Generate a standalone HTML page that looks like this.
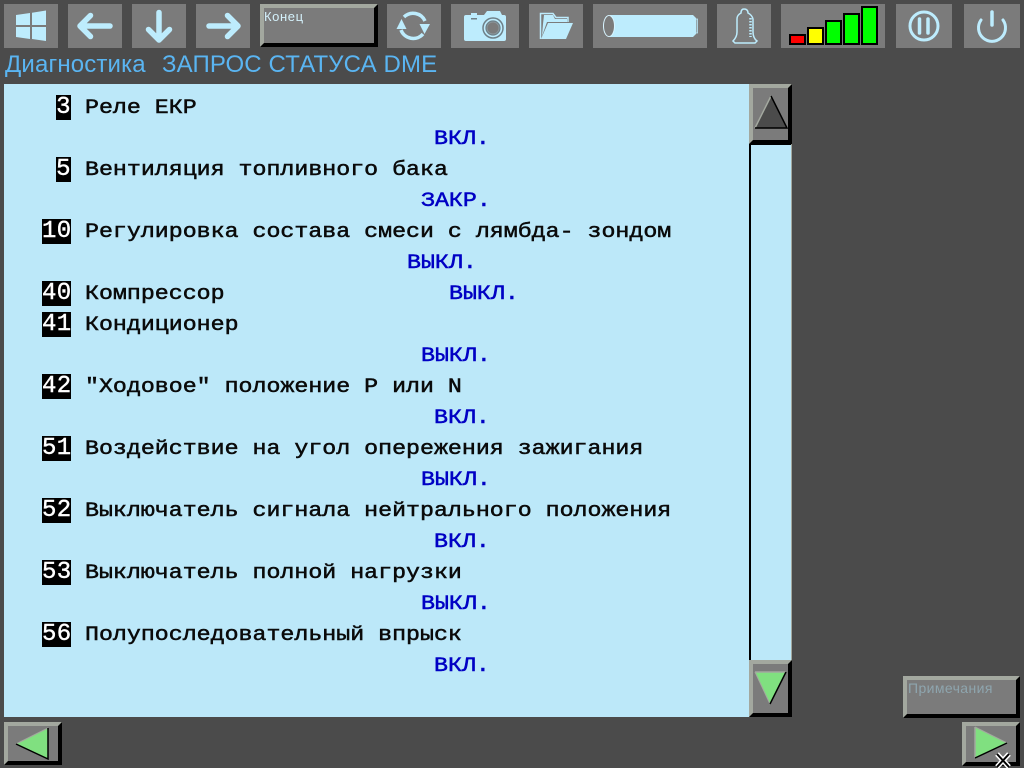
<!DOCTYPE html>
<html lang="ru">
<head>
<meta charset="utf-8">
<title>Диагностика</title>
<style>
html,body{margin:0;padding:0;background:#4b4b4b;}
#s{position:relative;width:1024px;height:768px;overflow:hidden;background:#4b4b4b;font-family:"Liberation Sans",sans-serif;}
#s>*{position:absolute;}
.b{background:#7b7b7b;top:4px;height:44px;}
.b svg{position:absolute;left:0;top:0;}
.bev{box-sizing:border-box;background:#7b7b7b;border:4px solid;border-color:#a3a89f #000 #000 #a3a89f;}
.t{left:0;height:31px;line-height:31px;white-space:pre;font-family:"Liberation Mono",monospace;font-size:20px;color:#0a0a0a;transform:scaleX(1.163);transform-origin:0 50%;-webkit-text-stroke:.5px currentColor;}
.v{color:#0000c4;}
.n{background:#000;color:#fff;height:25px;line-height:25px;text-align:center;font-family:"Liberation Mono",monospace;font-size:24px;letter-spacing:.3px;-webkit-text-stroke:.4px #fff;}
</style>
</head>
<body>
<div id="s">
<div class="b" style="left:4px;width:54px"><svg width="54" height="44"><path d="M12 11 L26 9 V21 H12Z M28 8.700 L42 6.500 V21 H28Z M12 23 H26 V35 L12 33Z M28 23 H42 V37 L28 35Z" fill="#bdecfd"/></svg></div>
<div class="b" style="left:68px;width:54px"><svg width="54" height="44" fill="none" stroke="#bdecfd" stroke-width="5.500" stroke-linecap="round" stroke-linejoin="round"><path d="M12 22 H42 M22.500 11.500 L12 22 L22.500 32.500"/></svg></div>
<div class="b" style="left:132px;width:54px"><svg width="54" height="44" fill="none" stroke="#bdecfd" stroke-width="5.500" stroke-linecap="round" stroke-linejoin="round"><path d="M27 8.500 V36 M16.500 25.500 L27 36 L37.500 25.500"/></svg></div>
<div class="b" style="left:196px;width:54px"><svg width="54" height="44" fill="none" stroke="#bdecfd" stroke-width="5.500" stroke-linecap="round" stroke-linejoin="round"><path d="M13 22 H42 M31.500 11.500 L42 22 L31.500 32.500"/></svg></div>
<div class="bev" style="left:260px;top:4px;width:118px;height:43px;color:#d4f1fb;font-size:13px;line-height:14px;"><span style="position:absolute;left:0;top:2px;letter-spacing:.6px">Конец</span></div>
<div class="b" style="left:387px;width:54px"><svg width="54" height="44" fill="none" stroke="#bdecfd" stroke-width="3.500"><path d="M17 13 A13 13 0 0 1 38 17"/><path d="M36 30 A13 13 0 0 1 14 26"/><path d="M14.500 15 L9.500 25 H19.500Z" fill="#bdecfd" stroke="none"/><path d="M37.500 30 L32.500 20 H43Z" fill="#bdecfd" stroke="none"/></svg></div>
<div class="b" style="left:451px;width:68px"><svg width="68" height="44"><path d="M15 11 H20 V9 H26 V11 H33 L36 7 H49 L51 11 H53 Q55 11 55 13 V35 Q55 37 53 37 H15 Q13 37 13 35 V13 Q13 11 15 11Z" fill="#bdecfd"/><rect x="20" y="14" width="6" height="1.500" fill="#6f8088"/><circle cx="42" cy="24" r="11" fill="#bdecfd"/><circle cx="42" cy="24" r="10" fill="none" stroke="#6f8088" stroke-width="1.500"/><circle cx="42" cy="24" r="7" fill="#8b979c" stroke="#6f8088" stroke-width="1.200"/><circle cx="42" cy="24" r="5.500" fill="#7b7b7b"/></svg></div>
<div class="b" style="left:529px;width:54px"><svg width="54" height="44"><path d="M11.500 35 V9.500 H24 L27 13.500 H39 V18" fill="none" stroke="#bdecfd" stroke-width="1.500"/><path d="M19 19 H44 L37 35 H12Z M14 20 L15 11 H24 L26 15 H38 V18 H18 L13 32Z" fill="#bdecfd"/></svg></div>
<div class="b" style="left:593px;width:114px"><svg width="114" height="44"><path d="M17 11 H100 L103 14 V30 L100 33 H17Z" fill="#bdecfd"/><ellipse cx="16" cy="22" rx="5.500" ry="10.500" fill="#7b7b7b" stroke="#d8f4ff" stroke-width="1"/><rect x="103" y="15" width="1.500" height="14" fill="#7b7b7b" stroke="#bdecfd" stroke-width=".8"/></svg></div>
<div class="b" style="left:717px;width:54px"><svg width="54" height="44"><path d="M27 5 Q24 5 24 9 Q20 11 20 15 L20 28 Q20 33 16 37 L18 39 H38 L40 37 Q36 34 36 28 L36 15 Q35 11 31 9 Q31 5 27 5Z" fill="none" stroke="#bdecfd" stroke-width="1.500"/><path d="M33.500 14 V33" stroke="#bdecfd" stroke-width="2.500" stroke-dasharray="1.500 1.500"/></svg></div>
<div class="b" style="left:781px;width:104px"><svg width="104" height="44" stroke="#000" stroke-width="2"><rect x="9" y="31" width="15" height="9" fill="#f00"/><rect x="27" y="24" width="15" height="16" fill="#ff0"/><rect x="45" y="17" width="15" height="23" fill="#0f0"/><rect x="63" y="10" width="15" height="30" fill="#0f0"/><rect x="81" y="3" width="15" height="37" fill="#0f0"/></svg></div>
<div class="b" style="left:896px;width:56px"><svg width="56" height="44" fill="none" stroke="#bdecfd"><circle cx="28" cy="22" r="14" stroke-width="3"/><path d="M23.500 15 V29 M32 15 V29" stroke-width="3.500" stroke-linecap="round"/></svg></div>
<div class="b" style="left:964px;width:56px"><svg width="56" height="44" fill="none" stroke="#bdecfd" stroke-linecap="round"><path d="M17 16 A13.500 13.500 0 1 0 39 16" stroke-width="3"/><path d="M28 8 V21" stroke-width="3.500"/></svg></div>

<div style="left:5px;top:50px;height:30px;line-height:30px;font-size:24px;color:#5ab5f2;white-space:pre;letter-spacing:.15px">Диагностика</div>
<div style="left:162px;top:50px;height:30px;line-height:30px;font-size:24px;color:#5ab5f2;white-space:pre;letter-spacing:.13px">ЗАПРОС СТАТУСА DME</div>

<div style="left:4px;top:84px;width:745px;height:633px;background:#bce8f9"></div>
<div id="list" style="left:0;top:1px;width:760px;height:720px">
<style>#list>*{position:absolute}</style>
<div class="n" style="left:56px;top:94px;width:15px">3</div><div class="t" style="left:85px;top:92px">Реле ЕКР</div>
<div class="t v" style="left:434px;top:123px">ВКЛ.</div>
<div class="n" style="left:56px;top:156px;width:15px">5</div><div class="t" style="left:85px;top:154px">Вентиляция топливного бака</div>
<div class="t v" style="left:421px;top:185px">ЗАКР.</div>
<div class="n" style="left:42px;top:218px;width:29px">10</div><div class="t" style="left:85px;top:216px">Регулировка состава смеси с лямбда- зондом</div>
<div class="t v" style="left:407px;top:247px">ВЫКЛ.</div>
<div class="n" style="left:42px;top:280px;width:29px">40</div><div class="t" style="left:85px;top:278px">Компрессор</div>
<div class="t v" style="left:449px;top:278px">ВЫКЛ.</div>
<div class="n" style="left:42px;top:311px;width:29px">41</div><div class="t" style="left:85px;top:309px">Кондиционер</div>
<div class="t v" style="left:421px;top:340px">ВЫКЛ.</div>
<div class="n" style="left:42px;top:373px;width:29px">42</div><div class="t" style="left:85px;top:371px">"Ходовое" положение P или N</div>
<div class="t v" style="left:434px;top:402px">ВКЛ.</div>
<div class="n" style="left:42px;top:435px;width:29px">51</div><div class="t" style="left:85px;top:433px">Воздействие на угол опережения зажигания</div>
<div class="t v" style="left:421px;top:464px">ВЫКЛ.</div>
<div class="n" style="left:42px;top:497px;width:29px">52</div><div class="t" style="left:85px;top:495px">Выключатель сигнала нейтрального положения</div>
<div class="t v" style="left:434px;top:526px">ВКЛ.</div>
<div class="n" style="left:42px;top:559px;width:29px">53</div><div class="t" style="left:85px;top:557px">Выключатель полной нагрузки</div>
<div class="t v" style="left:421px;top:588px">ВЫКЛ.</div>
<div class="n" style="left:42px;top:621px;width:29px">56</div><div class="t" style="left:85px;top:619px">Полупоследовательный впрыск</div>
<div class="t v" style="left:434px;top:650px">ВКЛ.</div>
</div>

<div style="box-sizing:border-box;left:749px;top:141px;width:43px;height:520px;background:#bce8f9;border-left:2px solid #000;border-top:4px solid #000;border-right:1px solid #a3a89f"></div>
<div class="bev" style="left:749px;top:84px;width:43px;height:60px"></div>
<svg style="left:749px;top:84px" width="43" height="60"><path d="M22 12 L6 44 H38Z" fill="#4b4b4b"/><path d="M6 44 L22 12" stroke="#a3a89f" stroke-width="1.500"/><path d="M22 12 L38 44 H6" fill="none" stroke="#000" stroke-width="1.500"/></svg>
<div class="bev" style="left:749px;top:660px;width:43px;height:57px"></div>
<svg style="left:749px;top:660px" width="43" height="57"><path d="M6 12 H37 L21 44Z" fill="#80e080"/><path d="M6 12 H37" stroke="#a3a89f" stroke-width="1.500"/><path d="M6 12 L21 44" stroke="#a3a89f" stroke-width="1"/><path d="M37 12 L21 44" stroke="#000" stroke-width="1.500"/></svg>

<div class="bev" style="left:903px;top:676px;width:117px;height:42px"></div>
<div style="left:908px;top:679px;font-size:14px;line-height:18px;color:#8ea5ae;white-space:pre;letter-spacing:.4px">Примечания</div>
<div class="bev" style="left:962px;top:722px;width:58px;height:44px"></div>
<svg style="left:962px;top:722px" width="58" height="46"><path d="M13 5 V36 L45 21Z" fill="#80e080"/><path d="M13 5 L45 21" stroke="#a3a89f" stroke-width="1"/><path d="M13 5 V36" stroke="#a3a89f" stroke-width="1.500"/><path d="M13 36 L45 21" stroke="#000" stroke-width="1.500"/></svg>
<div class="bev" style="left:4px;top:722px;width:58px;height:43px"></div>
<svg style="left:4px;top:722px" width="58" height="43"><path d="M44 6 V37 L12 22Z" fill="#80e080"/><path d="M12 22 L44 6" stroke="#a3a89f" stroke-width="1"/><path d="M44 6 V37 L12 22" fill="none" stroke="#000" stroke-width="1.500"/></svg>
<svg style="left:994px;top:752px" width="18" height="16"><path d="M3 2 L15 15 M15 2 L3 15" stroke="#fff" stroke-width="5"/><path d="M3 2 L15 15 M15 2 L3 15" stroke="#000" stroke-width="2"/></svg>
</div>
</body>
</html>
